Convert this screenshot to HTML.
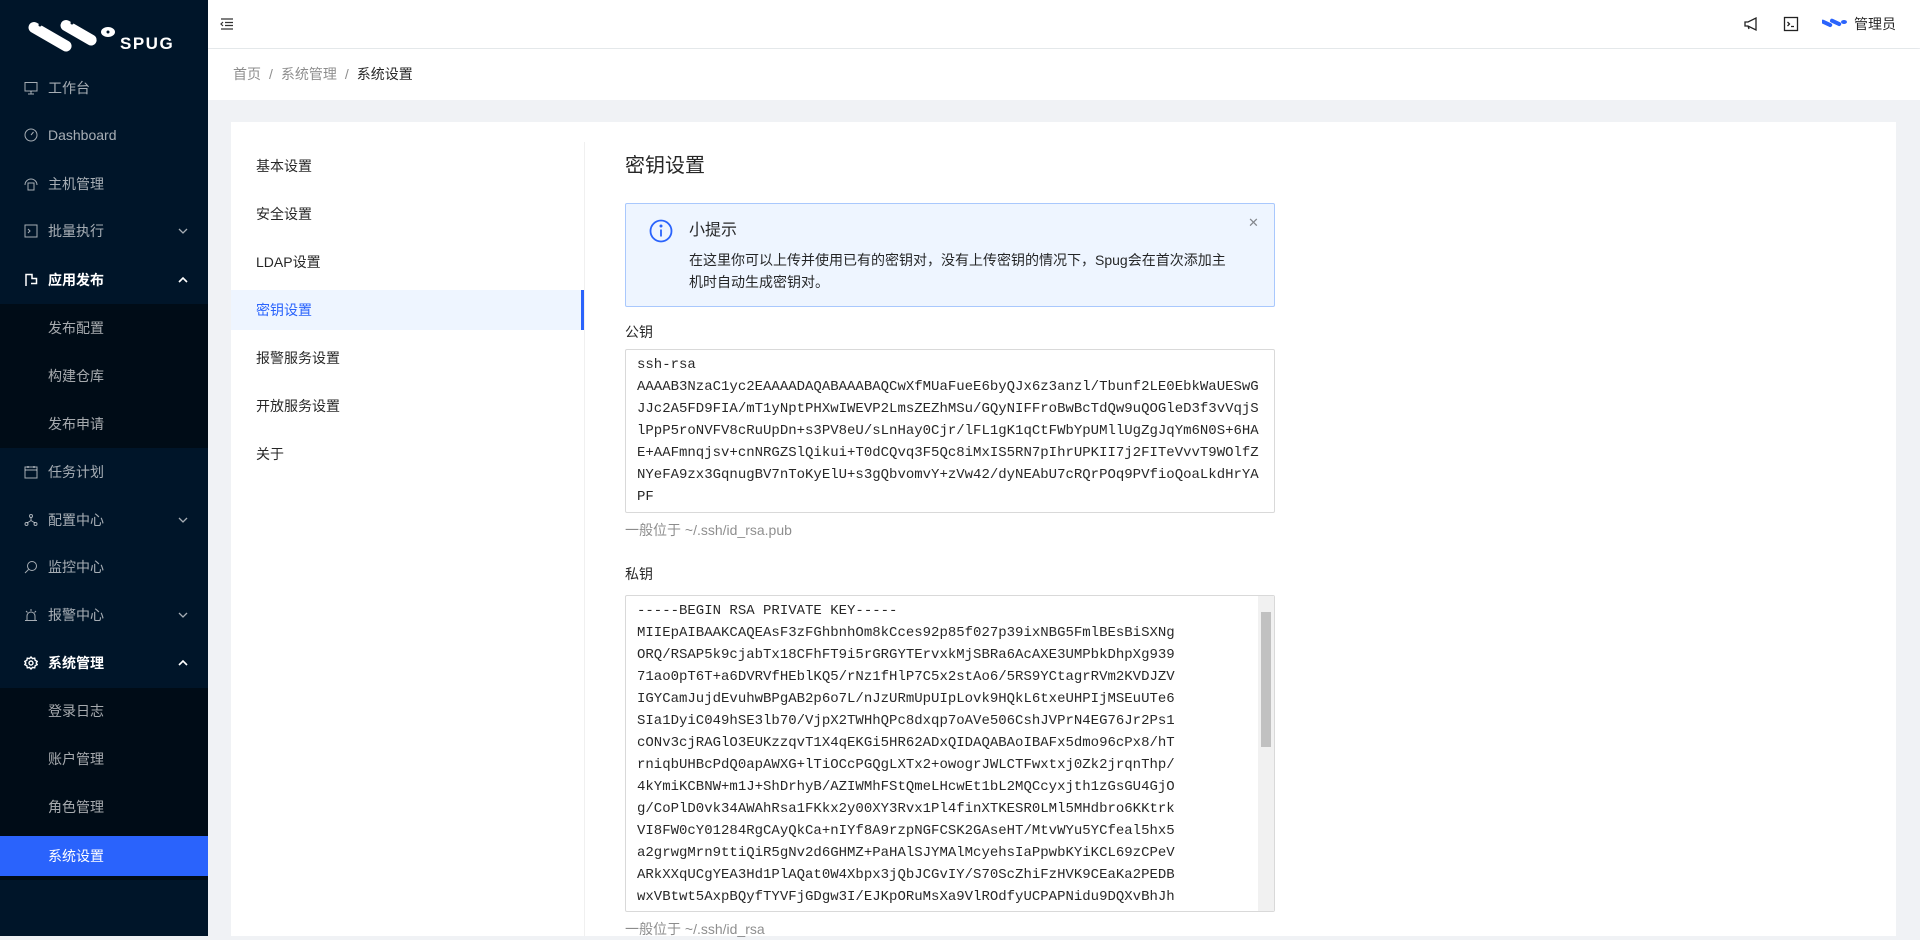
<!DOCTYPE html>
<html><head><meta charset="utf-8">
<style>
*{box-sizing:border-box;margin:0;padding:0}
body{width:1920px;height:936px;overflow:hidden;background:#f0f2f5;font-family:"Liberation Sans","Noto Sans CJK SC",sans-serif;font-size:14px;color:rgba(0,0,0,.85);position:relative}
.abs{position:absolute}
.side{left:0;top:0;width:208px;height:936px;background:#001529}
.sub{left:0;width:208px;background:#000c17}
.mi{position:absolute;left:0;width:208px;height:40px;line-height:40px;color:rgba(255,255,255,.65);font-size:14px}
.mi .t{position:absolute;left:48px}
.mi svg{position:absolute;left:24px;top:13px}
.mi svg.ar{left:178px;top:16px}
.mi.w{color:#fff}
.hdr{left:208px;top:0;width:1712px;height:48px;background:#fff;box-shadow:0 1px 4px rgba(0,21,41,.08)}
.bc{left:208px;top:49px;width:1712px;height:51px;background:#fff}
.card{left:231px;top:122px;width:1665px;height:814px;background:#fff}
.lm{position:absolute;left:0;width:353px;height:40px;line-height:40px;padding-left:25px}
.ta{position:absolute;left:625px;width:650px;border:1px solid #d9d9d9;border-radius:2px;padding:4px 11px;font-family:"Liberation Mono",monospace;font-size:14px;line-height:22px;color:rgba(0,0,0,.85);overflow:hidden;white-space:pre}
</style></head><body>
<div class="abs side">
 <svg class="abs" style="left:28px;top:14px" width="156" height="40" viewBox="0 0 156 40">
  <g fill="#fff"><rect x="4" y="6" width="48" height="11" rx="5.5" transform="rotate(30 4 6)"/><rect x="36" y="4" width="40" height="11" rx="5.5" transform="rotate(30 36 4)"/><ellipse cx="80" cy="18" rx="7" ry="5"/></g>
  <g fill="#001529"><circle cx="12" cy="11" r="1.5"/><circle cx="44" cy="9" r="1.5"/><circle cx="80" cy="18" r="1.5"/></g>
  <text x="92" y="35" fill="#fff" font-family="Liberation Sans" font-weight="bold" font-size="17" letter-spacing="1.5">SPUG</text>
 </svg>
 <div class="abs sub" style="top:304px;height:144px"></div>
 <div class="abs sub" style="top:688px;height:192px"></div>
 <div class="mi" style="top:68px"><svg width="14" height="14" viewBox="0 0 14 14" fill="none" stroke="currentColor"><rect x="1" y="1.5" width="12" height="8.5"/><path d="M7 10v3M4 13h6"/></svg><span class="t">工作台</span></div>
 <div class="mi" style="top:115px"><svg width="14" height="14" viewBox="0 0 14 14" fill="none" stroke="currentColor"><circle cx="7" cy="7" r="6"/><path d="M7 7l2.5-3"/></svg><span class="t">Dashboard</span></div>
 <div class="mi" style="top:164px"><svg width="14" height="14" viewBox="0 0 14 14" fill="none" stroke="currentColor"><path d="M1 8a6 6 0 0112 0"/><rect x="4" y="6" width="6" height="7"/></svg><span class="t">主机管理</span></div>
 <div class="mi" style="top:211px"><svg width="14" height="14" viewBox="0 0 14 14" fill="none" stroke="currentColor"><rect x="1" y="1" width="12" height="12"/><path d="M4 5l2 2-2 2"/></svg><span class="t">批量执行</span><svg class="ar" width="10" height="8" viewBox="0 0 10 8" fill="none" stroke="currentColor" stroke-width="1.3"><path d="M1 2l4 4 4-4"/></svg></div>
 <div class="mi w" style="top:260px"><svg width="14" height="14" viewBox="0 0 14 14" fill="none" stroke="currentColor" stroke-width="1.5"><path d="M2 13V1.5h6v4h4.5v5H7"/></svg><span class="t" style="font-weight:bold">应用发布</span><svg class="ar" width="10" height="8" viewBox="0 0 10 8" fill="none" stroke="currentColor" stroke-width="1.6"><path d="M1 6l4-4 4 4"/></svg></div>
 <div class="mi" style="top:308px"><span class="t">发布配置</span></div>
 <div class="mi" style="top:356px"><span class="t">构建仓库</span></div>
 <div class="mi" style="top:404px"><span class="t">发布申请</span></div>
 <div class="mi" style="top:452px"><svg width="14" height="14" viewBox="0 0 14 14" fill="none" stroke="currentColor"><rect x="1" y="2" width="12" height="11"/><path d="M1 5h12M4 1v2M10 1v2"/></svg><span class="t">任务计划</span></div>
 <div class="mi" style="top:500px"><svg width="14" height="14" viewBox="0 0 14 14" fill="none" stroke="currentColor"><circle cx="7" cy="3" r="1.5"/><circle cx="2.5" cy="11" r="1.5"/><circle cx="11.5" cy="11" r="1.5"/><path d="M7 4.5v3L3 10M7 7.5l4 2.5"/></svg><span class="t">配置中心</span><svg class="ar" width="10" height="8" viewBox="0 0 10 8" fill="none" stroke="currentColor" stroke-width="1.3"><path d="M1 2l4 4 4-4"/></svg></div>
 <div class="mi" style="top:547px"><svg width="14" height="14" viewBox="0 0 14 14" fill="none" stroke="currentColor"><circle cx="8" cy="6" r="4.5"/><path d="M4.5 9.5L1 13"/></svg><span class="t">监控中心</span></div>
 <div class="mi" style="top:595px"><svg width="14" height="14" viewBox="0 0 14 14" fill="none" stroke="currentColor"><path d="M3 12V8a4 4 0 018 0v4M1 12.5h12M7 1v2M2 3l1.5 1.5M12 3l-1.5 1.5"/></svg><span class="t">报警中心</span><svg class="ar" width="10" height="8" viewBox="0 0 10 8" fill="none" stroke="currentColor" stroke-width="1.3"><path d="M1 2l4 4 4-4"/></svg></div>
 <div class="mi w" style="top:643px"><svg width="14" height="14" viewBox="0 0 14 14" fill="none" stroke="currentColor" stroke-width="1.4"><circle cx="7" cy="7" r="2"/><path d="M7 1l1.5 1.6 2.2-.4.5 2.2 2 1L12.2 7l1 1.6-2 1-.5 2.2-2.2-.4L7 13l-1.5-1.6-2.2.4-.5-2.2-2-1L1.8 7l-1-1.6 2-1 .5-2.2 2.2.4z"/></svg><span class="t" style="font-weight:bold">系统管理</span><svg class="ar" width="10" height="8" viewBox="0 0 10 8" fill="none" stroke="currentColor" stroke-width="1.6"><path d="M1 6l4-4 4 4"/></svg></div>
 <div class="mi" style="top:691px"><span class="t">登录日志</span></div>
 <div class="mi" style="top:739px"><span class="t">账户管理</span></div>
 <div class="mi" style="top:787px"><span class="t">角色管理</span></div>
 <div class="mi w" style="top:836px;background:#2a63fc"><span class="t">系统设置</span></div>
</div>

<div class="abs hdr">
 <svg class="abs" style="left:12px;top:17px" width="14" height="14" viewBox="0 0 14 14" fill="none" stroke="#333" stroke-width="1.2"><path d="M1 2h12M5 5.5h8M5 8.5h8M1 12h12M3 5L1 7l2 2"/></svg>
 <svg class="abs" style="left:1535px;top:16px" width="16" height="16" viewBox="0 0 16 16" fill="none" stroke="#222" stroke-width="1.3"><path d="M2 6h3l8-4v12L5 10H2zM5 10l1 3"/></svg>
 <svg class="abs" style="left:1575px;top:16px" width="16" height="16" viewBox="0 0 16 16" fill="none" stroke="#222" stroke-width="1.3"><rect x="1.5" y="1.5" width="13" height="13"/><path d="M4.5 6l2 2-2 2M8 10.5h3"/></svg>
 <svg class="abs" style="left:1614px;top:17px" width="26" height="12" viewBox="0 0 26 12" fill="#2a63fc"><rect x="0" y="2" width="12" height="4" rx="2" transform="rotate(25 0 2)"/><rect x="9" y="1" width="12" height="4" rx="2" transform="rotate(25 9 1)"/><ellipse cx="22" cy="5" rx="3" ry="2"/></svg>
 <div class="abs" style="left:1646px;top:13px;line-height:22px;color:rgba(0,0,0,.85)">管理员</div>
</div>
<div class="abs bc"><div class="abs" style="left:25px;top:14px;line-height:22px;color:rgba(0,0,0,.45)">首页<span style="margin:0 8px">/</span>系统管理<span style="margin:0 8px">/</span><span style="color:rgba(0,0,0,.85)">系统设置</span></div></div>

<div class="abs card">
 <div class="abs" style="left:353px;top:20px;width:1px;height:794px;background:#f0f0f0"></div>
 <div class="lm" style="top:24px">基本设置</div>
 <div class="lm" style="top:72px">安全设置</div>
 <div class="lm" style="top:120px">LDAP设置</div>
 <div class="lm" style="top:168px;background:#eef5ff;color:#2a63fc;border-right:3px solid #2a63fc">密钥设置</div>
 <div class="lm" style="top:216px">报警服务设置</div>
 <div class="lm" style="top:264px">开放服务设置</div>
 <div class="lm" style="top:312px">关于</div>
</div>

<div class="abs" style="left:625px;top:151px;font-size:20px;line-height:30px;color:rgba(0,0,0,.85)">密钥设置</div>
<div class="abs" style="left:625px;top:203px;width:650px;height:104px;background:#eef5ff;border:1px solid #a9c8fd;border-radius:2px">
 <svg class="abs" style="left:23px;top:15px" width="24" height="24" viewBox="0 0 24 24" fill="none" stroke="#2a63fc" stroke-width="1.8"><circle cx="12" cy="12" r="10.5"/><path d="M12 10.5v7"/><circle cx="12" cy="7" r=".6" fill="#2a63fc"/></svg>
 <div class="abs" style="left:63px;top:15px;font-size:16px;line-height:24px">小提示</div>
 <div class="abs" style="left:63px;top:45px;width:540px;line-height:22px;font-size:14px">在这里你可以上传并使用已有的密钥对，没有上传密钥的情况下，Spug会在首次添加主机时自动生成密钥对。</div>
 <div class="abs" style="left:622px;top:11px;font-size:13px;color:rgba(0,0,0,.45)">✕</div>
</div>
<div class="abs" style="left:625px;top:321px;line-height:22px">公钥</div>
<div class="ta" style="top:349px;height:164px">ssh-rsa
AAAAB3NzaC1yc2EAAAADAQABAAABAQCwXfMUaFueE6byQJx6z3anzl/Tbunf2LE0EbkWaUESwG
JJc2A5FD9FIA/mT1yNptPHXwIWEVP2LmsZEZhMSu/GQyNIFFroBwBcTdQw9uQOGleD3f3vVqjS
lPpP5roNVFV8cRuUpDn+s3PV8eU/sLnHay0Cjr/lFL1gK1qCtFWbYpUMllUgZgJqYm6N0S+6HA
E+AAFmnqjsv+cnNRGZSlQikui+T0dCQvq3F5Qc8iMxIS5RN7pIhrUPKII7j2FITeVvvT9WOlfZ
NYeFA9zx3GqnugBV7nToKyElU+s3gQbvomvY+zVw42/dyNEAbU7cRQrPOq9PVfioQoaLkdHrYA
PF</div>
<div class="abs" style="left:625px;top:519px;line-height:22px;color:rgba(0,0,0,.45)">一般位于 ~/.ssh/id_rsa.pub</div>
<div class="abs" style="left:625px;top:563px;line-height:22px">私钥</div>
<div class="ta" style="top:595px;height:317px">-----BEGIN RSA PRIVATE KEY-----
MIIEpAIBAAKCAQEAsF3zFGhbnhOm8kCces92p85f027p39ixNBG5FmlBEsBiSXNg
ORQ/RSAP5k9cjabTx18CFhFT9i5rGRGYTErvxkMjSBRa6AcAXE3UMPbkDhpXg939
71ao0pT6T+a6DVRVfHEblKQ5/rNz1fHlP7C5x2stAo6/5RS9YCtagrRVm2KVDJZV
IGYCamJujdEvuhwBPgAB2p6o7L/nJzURmUpUIpLovk9HQkL6txeUHPIjMSEuUTe6
SIa1DyiC049hSE3lb70/VjpX2TWHhQPc8dxqp7oAVe506CshJVPrN4EG76Jr2Ps1
cONv3cjRAGlO3EUKzzqvT1X4qEKGi5HR62ADxQIDAQABAoIBAFx5dmo96cPx8/hT
rniqbUHBcPdQ0apAWXG+lTiOCcPGQgLXTx2+owogrJWLCTFwxtxj0Zk2jrqnThp/
4kYmiKCBNW+m1J+ShDrhyB/AZIWMhFStQmeLHcwEt1bL2MQCcyxjth1zGsGU4GjO
g/CoPlD0vk34AWAhRsa1FKkx2y00XY3Rvx1Pl4finXTKESR0LMl5MHdbro6KKtrk
VI8FW0cY01284RgCAyQkCa+nIYf8A9rzpNGFCSK2GAseHT/MtvWYu5YCfeal5hx5
a2grwgMrn9ttiQiR5gNv2d6GHMZ+PaHAlSJYMAlMcyehsIaPpwbKYiKCL69zCPeV
ARkXXqUCgYEA3Hd1PlAQat0W4Xbpx3jQbJCGvIY/S70ScZhiFzHVK9CEaKa2PEDB
wxVBtwt5AxpBQyfTYVFjGDgw3I/EJKpORuMsXa9VlROdfyUCPAPNidu9DQXvBhJh</div>
<div class="abs" style="left:1258px;top:596px;width:16px;height:315px;background:#f1f1f1"><div class="abs" style="left:3px;top:16px;width:10px;height:135px;background:#c1c1c1"></div></div>
<div class="abs" style="left:625px;top:918px;line-height:22px;color:rgba(0,0,0,.45)">一般位于 ~/.ssh/id_rsa</div>
</body></html>
